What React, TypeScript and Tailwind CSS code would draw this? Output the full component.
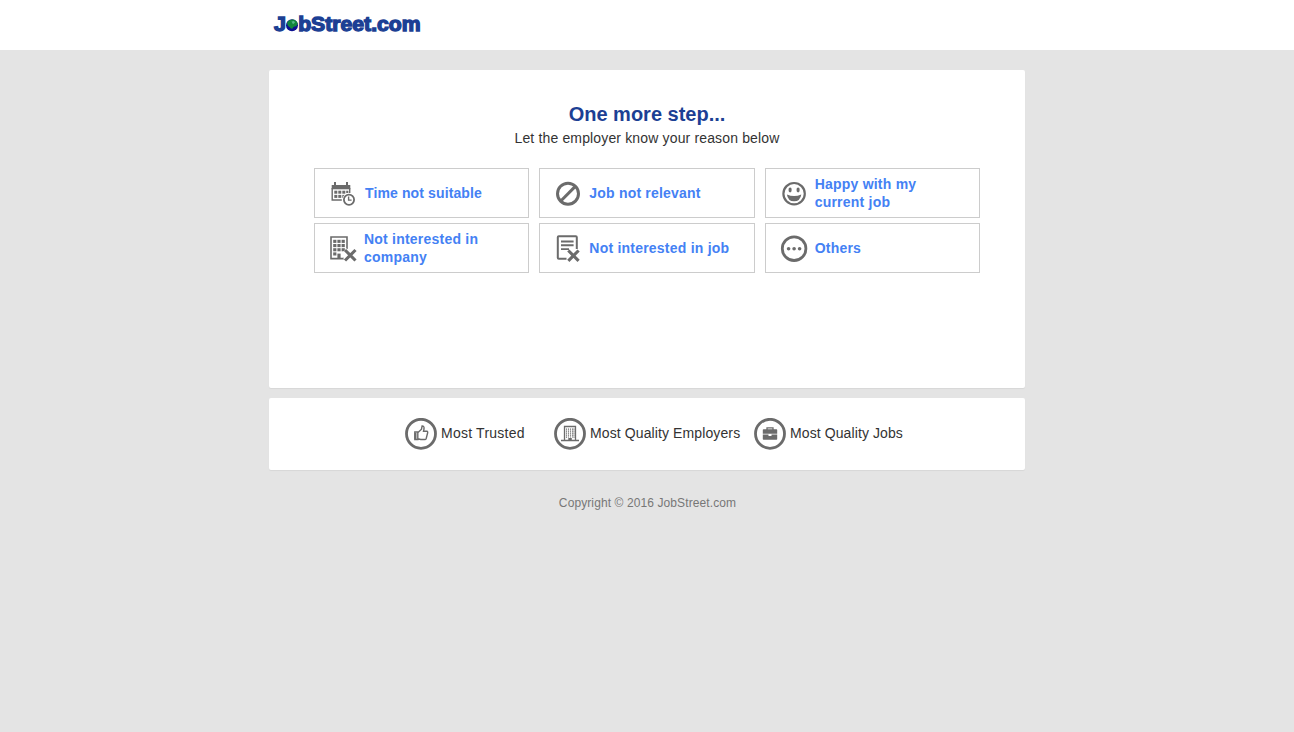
import type { ReactNode } from "react";

const Svg = ({ children }: { children: ReactNode }) => (
  <svg width="36" height="34" viewBox="0 0 36 34" className="shrink-0" fill="none" stroke="#6b6b6b">
    {children}
  </svg>
);

const grid = (xs: number[], ys: number[], w: number, h: number) =>
  ys.flatMap((y) => xs.map((x) => <rect key={`${x}-${y}`} x={x} y={y} width={w} height={h} fill="#6b6b6b" stroke="none" />));

const CalendarClock = () => (
  <Svg>
    <path d="M8 6v4M20 6v4" strokeWidth="2" />
    <path d="M4.7 9h18.6v4.3H4.7z" fill="#6b6b6b" stroke="none" />
    <path d="M5.2 12v12h9.6M22.7 12v5" strokeWidth="1.4" />
    {grid([7.3, 11.3, 15.3], [14.7, 18.9], 3, 3)}
    {grid([19.2], [14.7], 2.2, 2.4)}
    <circle cx="22" cy="23.7" r="6.6" fill="#fff" stroke="none" />
    <circle cx="22" cy="23.7" r="5.1" strokeWidth="1.8" />
    <path d="M21.6 20.6v3.5h3" strokeWidth="1.4" />
  </Svg>
);

const BuildingX = () => (
  <Svg>
    <path d="M17 27.6H4V6h16v12.5" strokeWidth="1.6" />
    {grid([6.2, 10.4, 14.6], [8.8, 13, 17.2], 3.2, 3.1)}
    {grid([6.2], [21.4], 3.2, 3.1)}
    {grid([10.4], [22.6], 3.2, 5.2)}
    <path d="M18 19l10.5 10.5M28.5 19L18 29.5" stroke="#fff" strokeWidth="5" />
    <path d="M18 19l10.5 10.5M28.5 19L18 29.5" strokeWidth="3.1" />
  </Svg>
);

const Ban = () => (
  <Svg>
    <circle cx="16" cy="17.7" r="10.5" strokeWidth="3" />
    <path d="M8.8 25L23.3 10.4" strokeWidth="3" />
  </Svg>
);

const DocumentX = () => (
  <Svg>
    <path d="M14.5 27.8H6.8a1 1 0 0 1-1-1V6.2a1 1 0 0 1 1-1h17a1 1 0 0 1 1 1V18" strokeWidth="2" />
    <path d="M9 10.5h12.6M9 14.3h12.6M9 18.1h8" strokeWidth="1.9" />
    <path d="M16.3 19.5l10.3 10.3M26.6 19.5L16.3 29.8" strokeWidth="3.1" />
  </Svg>
);

const Smile = () => (
  <Svg>
    <circle cx="16.1" cy="17.7" r="10.7" strokeWidth="2.2" />
    <ellipse cx="12.1" cy="14" rx="1.6" ry="2.4" fill="#6b6b6b" stroke="none" />
    <ellipse cx="20.1" cy="14" rx="1.6" ry="2.4" fill="#6b6b6b" stroke="none" />
    <path d="M8.9 18.4q7.2 3 14.4 0q-1 6.8-7.2 6.8t-7.2-6.8z" fill="#6b6b6b" stroke="none" />
  </Svg>
);

const Dots = () => (
  <Svg>
    <circle cx="16.1" cy="17.7" r="11.8" strokeWidth="2.8" />
    {[10.6, 16.1, 21.6].map((x) => (
      <circle key={x} cx={x} cy="17.7" r="1.8" fill="#6b6b6b" stroke="none" />
    ))}
  </Svg>
);

const Badge = ({ children }: { children: ReactNode }) => (
  <svg width="32" height="32" viewBox="0 0 32 32" className="shrink-0" fill="none" stroke="#6b6b6b">
    <circle cx="16" cy="15.8" r="14.5" strokeWidth="2.8" />
    {children}
  </svg>
);

const reasons = [
  { icon: <CalendarClock />, label: "Time not suitable", cls: "ml-0.5 tracking-[0.12px]" },
  { icon: <Ban />, label: "Job not relevant", cls: "ml-px tracking-[0.2px]" },
  { icon: <Smile />, label: "Happy with my current job", cls: "ml-px w-[120px] tracking-[0.22px]" },
  { icon: <BuildingX />, label: "Not interested in company", cls: "ml-px w-[120px] tracking-[0.22px]" },
  { icon: <DocumentX />, label: "Not interested in job", cls: "ml-px tracking-[0.22px]" },
  { icon: <Dots />, label: "Others", cls: "ml-px tracking-[0.22px]" },
];

const Logo = () => (
  <svg width="154" height="24" viewBox="0 0 154 24" fontFamily="Liberation Sans, Arial, sans-serif" fontSize="19.3" fontWeight="700" fill="#1c3f94" stroke="#1c3f94" strokeWidth="1.3">
    <text x="4.9" y="19" textLength="12" lengthAdjust="spacingAndGlyphs">J</text>
    <text x="29.2" y="19" textLength="122.4" lengthAdjust="spacingAndGlyphs">bStreet.com</text>
    <circle cx="23" cy="13.3" r="6" fill="#0c1090" stroke="none" />
    <path d="M18.2 10.2Q20 7.2 23.5 7.4q4 .3 5.2 4-.6 2.6-2.8 3.2-1.700.2-2.300 2-1.800.6-3-1.600-2.600-1-2.400-4.800z" fill="#12863c" stroke="none" />
    <path d="M22.500 9.500l2.500-.6 1 1.600-2 1.800z" fill="#55b98a" stroke="none" />
  </svg>
);

export default function App() {
  return (
    <div className="min-h-screen bg-[#e4e4e4] font-['Liberation_Sans',Arial,sans-serif] text-sm text-[#333]">
      <header className="h-[50px] bg-white">
        <div className="mx-auto w-[756px] pt-3">
          <Logo />
        </div>
      </header>
      <main className="mx-auto w-[756px] pt-5">
        <section className="h-[318px] rounded-xs bg-white px-[45px] pt-8 text-center shadow-[0_1px_1px_rgba(0,0,0,0.06)]">
          <h1 className="text-xl leading-6 font-bold text-[#1c3f94]">One more step...</h1>
          <p className="leading-6 tracking-[0.15px]">Let the employer know your reason below</p>
          <div className="mt-[18px] grid grid-cols-3 gap-x-2.5 gap-y-[5px]">
            {reasons.map((r) => (
              <button key={r.label} className="flex h-[50px] items-center border border-[#ccc] pl-3 text-left leading-[18px] font-bold text-[#4481f4]">
                {r.icon}
                <span className={r.cls}>{r.label}</span>
              </button>
            ))}
          </div>
        </section>
        <section className="mt-2.5 flex h-[72px] items-center rounded-xs bg-white pl-[136px] leading-5 shadow-[0_1px_1px_rgba(0,0,0,0.06)]">
          <div className="flex w-[149px] items-center gap-1">
            <Badge>
              <path d="M9.800 14h3v7.500h-3zM13 14.500l3.500-3.300.6-3.200q2.400 0 1.900 3l-.5 2.200h3.300q1.200.3.800 1.800l-1.400 5.500q-.3 1-1.500 1h-4l-2.700-.8" strokeWidth="1.4" />
              <path d="M9.500 15h2v6h-2z" fill="#6b6b6b" stroke="none" />
            </Badge>
            <span className="pb-0.5 tracking-[0.23px]">Most Trusted</span>
          </div>
          <div className="flex w-[200px] items-center gap-1">
            <Badge>
              <path d="M10.500 22.500V8.500h11v14M7 22.500h18" strokeWidth="1.300" />
              <path d="M12.500 10.500v10M14.500 10.500v9M16.500 10.500v9M18.500 10.500v9M20 10.500v10" strokeWidth="1.100" strokeDasharray="1.3 0.7" />
              <path d="M14.300 20h3.500v3h-3.500z" fill="#6b6b6b" stroke="none" />
            </Badge>
            <span className="pb-0.5 tracking-[0.11px]">Most Quality Employers</span>
          </div>
          <div className="flex items-center gap-1">
            <Badge>
              <path d="M13 12V9.800h6V12" strokeWidth="1.300" />
              <path d="M9.500 11.300h13q.7 0 .7.700v3.800H8.800v-3.800q0-.7.7-.7zM8.800 16.600h5.700v1.300h3v-1.300h5.700v4.400q0 .7-.7.7h-13q-.7 0-.7-.7z" fill="#6b6b6b" stroke="none" />
            </Badge>
            <span className="pb-0.5 tracking-[0.1px]">Most Quality Jobs</span>
          </div>
        </section>
      </main>
      <footer className="pt-6 pl-px text-center text-xs leading-[18px] tracking-[0.1px] text-[#777]">Copyright © 2016 JobStreet.com</footer>
    </div>
  );
}
